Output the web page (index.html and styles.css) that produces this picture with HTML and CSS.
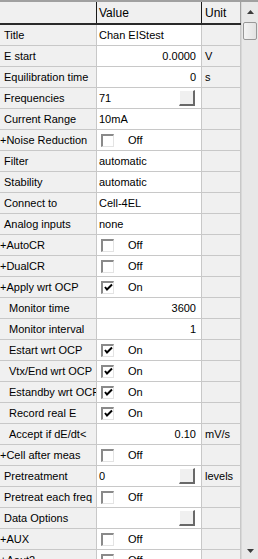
FILE: index.html
```html
<!DOCTYPE html>
<html>
<head>
<meta charset="utf-8">
<link rel="stylesheet" href="styles.css">
</head>
<body>
<div class="grid">
  <div class="main">
    <div class="hdr">
      <div class="hc hc-lbl"></div>
      <div class="hc hc-val">Value</div>
      <div class="hc hc-unit">Unit</div>
    </div>

    <div class="row"><div class="lbl">Title</div><div class="val">Chan EIStest</div><div class="unit"></div></div>
    <div class="row"><div class="lbl">E start</div><div class="val num">0.0000</div><div class="unit">V</div></div>
    <div class="row"><div class="lbl">Equilibration time</div><div class="val num">0</div><div class="unit">s</div></div>
    <div class="row"><div class="lbl">Frequencies</div><div class="val">71<span class="btn"></span></div><div class="unit"></div></div>
    <div class="row"><div class="lbl">Current Range</div><div class="val">10mA</div><div class="unit"></div></div>
    <div class="row"><div class="lbl exp">+Noise Reduction</div><div class="val"><span class="cb"></span><span class="cbt">Off</span></div><div class="unit"></div></div>
    <div class="row"><div class="lbl">Filter</div><div class="val">automatic</div><div class="unit"></div></div>
    <div class="row"><div class="lbl">Stability</div><div class="val">automatic</div><div class="unit"></div></div>
    <div class="row"><div class="lbl">Connect to</div><div class="val">Cell-4EL</div><div class="unit"></div></div>
    <div class="row"><div class="lbl">Analog inputs</div><div class="val">none</div><div class="unit"></div></div>
    <div class="row"><div class="lbl exp">+AutoCR</div><div class="val"><span class="cb"></span><span class="cbt">Off</span></div><div class="unit"></div></div>
    <div class="row"><div class="lbl exp">+DualCR</div><div class="val"><span class="cb"></span><span class="cbt">Off</span></div><div class="unit"></div></div>
    <div class="row"><div class="lbl exp">+Apply wrt OCP</div><div class="val"><span class="cb"><svg class="chk" viewBox="0 0 9 9"><path d="M1 4 L3 6.5 L8 1.5" /></svg></span><span class="cbt">On</span></div><div class="unit"></div></div>
    <div class="row"><div class="lbl sub">Monitor time</div><div class="val num">3600</div><div class="unit"></div></div>
    <div class="row"><div class="lbl sub">Monitor interval</div><div class="val num">1</div><div class="unit"></div></div>
    <div class="row"><div class="lbl sub">Estart wrt OCP</div><div class="val"><span class="cb"><svg class="chk" viewBox="0 0 9 9"><path d="M1 4 L3 6.5 L8 1.5" /></svg></span><span class="cbt">On</span></div><div class="unit"></div></div>
    <div class="row"><div class="lbl sub">Vtx/End wrt OCP</div><div class="val"><span class="cb"><svg class="chk" viewBox="0 0 9 9"><path d="M1 4 L3 6.5 L8 1.5" /></svg></span><span class="cbt">On</span></div><div class="unit"></div></div>
    <div class="row"><div class="lbl sub">Estandby wrt OCP</div><div class="val"><span class="cb"><svg class="chk" viewBox="0 0 9 9"><path d="M1 4 L3 6.5 L8 1.5" /></svg></span><span class="cbt">On</span></div><div class="unit"></div></div>
    <div class="row"><div class="lbl sub">Record real E</div><div class="val"><span class="cb"><svg class="chk" viewBox="0 0 9 9"><path d="M1 4 L3 6.5 L8 1.5" /></svg></span><span class="cbt">On</span></div><div class="unit"></div></div>
    <div class="row"><div class="lbl sub">Accept if dE/dt&lt;</div><div class="val num">0.10</div><div class="unit">mV/s</div></div>
    <div class="row"><div class="lbl exp">+Cell after meas</div><div class="val"><span class="cb"></span><span class="cbt">Off</span></div><div class="unit"></div></div>
    <div class="row"><div class="lbl">Pretreatment</div><div class="val">0<span class="btn"></span></div><div class="unit">levels</div></div>
    <div class="row"><div class="lbl">Pretreat each freq</div><div class="val"><span class="cb"></span><span class="cbt">Off</span></div><div class="unit"></div></div>
    <div class="row"><div class="lbl">Data Options</div><div class="val"><span class="btn"></span></div><div class="unit"></div></div>
    <div class="row"><div class="lbl exp">+AUX</div><div class="val"><span class="cb"></span><span class="cbt">Off</span></div><div class="unit"></div></div>
    <div class="row"><div class="lbl exp">+Aout2</div><div class="val"><span class="cb"></span><span class="cbt">Off</span></div><div class="unit"></div></div>
  </div>

  <div class="sbar">
    <div class="sb-btn"><svg viewBox="0 0 7 4" class="arr"><path d="M0 4 L3.5 0 L7 4 Z"/></svg></div>
    <div class="sb-thumb"></div>
    <div class="sb-track"></div>
    <div class="sb-btn"><svg viewBox="0 0 7 4" class="arr"><path d="M0 0 L3.5 4 L7 0 Z"/></svg></div>
  </div>
</div>
</body>
</html>
```

FILE: styles.css
```css
html, body {
  margin: 0;
  padding: 0;
  background: #f0f0f0;
  overflow: hidden;
}

.grid {
  display: flex;
  width: 258px;
  height: 561px;
  border-top: 2px solid #a0a0a0;
  box-sizing: border-box;
  font-family: "Liberation Sans", Arial, sans-serif;
  font-size: 11px;
  color: #000;
  overflow: hidden;
}

.main {
  width: 241px;
  flex: none;
  display: flex;
  flex-direction: column;
}

.hdr {
  display: grid;
  grid-template-columns: 97px 105px 39px;
  height: 23px;
  flex: none;
  border-bottom: 2px solid #2a2a2a;
  box-sizing: border-box;
  background: #f0f0f0;
}

.hc {
  display: flex;
  align-items: center;
  box-sizing: border-box;
  font-size: 12px;
}

.hc-lbl, .hc-val {
  border-right: 1px solid #1a1a1a;
}

.hc-val {
  padding-left: 2px;
}

.hc-unit {
  padding-left: 3px;
  border-right: 1px solid #a0a0a0;
}

.row {
  display: grid;
  grid-template-columns: 97px 105px 39px;
  height: 21px;
  flex: none;
}

.row > div {
  display: flex;
  align-items: center;
  box-sizing: border-box;
  border-right: 1px solid #c8c8c8;
  border-bottom: 1px solid #c8c8c8;
  white-space: nowrap;
  overflow: hidden;
}

.lbl {
  background: #f0f0f0;
  padding-left: 4px;
}

.lbl.exp {
  padding-left: 0;
}

.lbl.sub {
  padding-left: 9px;
}

.val {
  background: #fff;
  padding-left: 2px;
  padding-right: 5px;
}

.val.num {
  justify-content: flex-end;
}

.unit {
  background: #f0f0f0;
  padding-left: 3px;
}

.cb {
  width: 13px;
  height: 13px;
  margin-left: 2px;
  box-sizing: border-box;
  background: #fff;
  border-top: 2px solid #8a8a8a;
  border-left: 2px solid #8a8a8a;
  border-right: 1px solid #e3e3e3;
  border-bottom: 1px solid #e3e3e3;
  flex: none;
  display: flex;
  align-items: center;
  justify-content: center;
}

.chk {
  width: 9px;
  height: 9px;
  fill: none;
  stroke: #000;
  stroke-width: 2;
}

.cbt {
  margin-left: 14px;
}

.btn {
  width: 16px;
  height: 16px;
  margin-left: auto;
  margin-right: 1px;
  box-sizing: border-box;
  background: #f0f0f0;
  border-top: 1px solid #fff;
  border-left: 1px solid #fff;
  border-right: 2px solid #696969;
  border-bottom: 2px solid #696969;
  flex: none;
}

.sbar {
  width: 17px;
  flex: none;
  display: flex;
  flex-direction: column;
  background: #e8e8e8;
  border-left: 1px solid #d8d8d8;
  box-sizing: border-box;
}

.sb-btn {
  height: 20px;
  flex: none;
  display: flex;
  align-items: center;
  justify-content: center;
}

.arr {
  width: 7px;
  height: 4px;
  fill: #3c3c3c;
}

.sb-thumb {
  height: 18px;
  margin: 0 1px;
  flex: none;
  border: 1px solid #989898;
  border-radius: 2px;
  background: linear-gradient(to right, #f4f4f4, #e2e2e2);
  box-sizing: border-box;
}

.sb-track {
  flex: 1;
}
```
